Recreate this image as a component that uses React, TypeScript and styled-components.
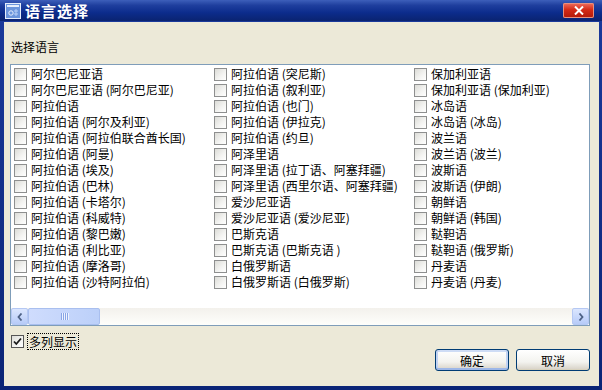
import React from 'react';
import styled, { createGlobalStyle } from 'styled-components';

const GlobalStyle = createGlobalStyle`
  html, body {
    margin: 0;
    padding: 0;
    background: #0a246a;
  }
  body {
    font-family: "Noto Sans CJK SC", "Noto Sans", sans-serif;
    font-size: 12px;
    color: #000;
  }
`;

const languages: string[] = [
  '阿尔巴尼亚语',
  '阿尔巴尼亚语 (阿尔巴尼亚)',
  '阿拉伯语',
  '阿拉伯语 (阿尔及利亚)',
  '阿拉伯语 (阿拉伯联合酋长国)',
  '阿拉伯语 (阿曼)',
  '阿拉伯语 (埃及)',
  '阿拉伯语 (巴林)',
  '阿拉伯语 (卡塔尔)',
  '阿拉伯语 (科威特)',
  '阿拉伯语 (黎巴嫩)',
  '阿拉伯语 (利比亚)',
  '阿拉伯语 (摩洛哥)',
  '阿拉伯语 (沙特阿拉伯)',
  '阿拉伯语 (突尼斯)',
  '阿拉伯语 (叙利亚)',
  '阿拉伯语 (也门)',
  '阿拉伯语 (伊拉克)',
  '阿拉伯语 (约旦)',
  '阿泽里语',
  '阿泽里语 (拉丁语、阿塞拜疆)',
  '阿泽里语 (西里尔语、阿塞拜疆)',
  '爱沙尼亚语',
  '爱沙尼亚语 (爱沙尼亚)',
  '巴斯克语',
  '巴斯克语 (巴斯克语 )',
  '白俄罗斯语',
  '白俄罗斯语 (白俄罗斯)',
  '保加利亚语',
  '保加利亚语 (保加利亚)',
  '冰岛语',
  '冰岛语 (冰岛)',
  '波兰语',
  '波兰语 (波兰)',
  '波斯语',
  '波斯语 (伊朗)',
  '朝鲜语',
  '朝鲜语 (韩国)',
  '鞑靼语',
  '鞑靼语 (俄罗斯)',
  '丹麦语',
  '丹麦语 (丹麦)',
];

const Window = styled.div`
  width: 602px;
  height: 390px;
  display: flex;
  flex-direction: column;
  box-sizing: border-box;
  background: linear-gradient(#1b3a9c, #0a2476);
  padding: 0 3px 4px 4px;
`;

const TitleBar = styled.div`
  height: 21px;
  display: flex;
  align-items: center;
  margin: 0 -3px 0 -4px;
  padding: 0 8px 0 5px;
  background: linear-gradient(#3d5fba 0%, #1f3f9e 25%, #0c2c8c 60%, #0a2370 100%);
`;

const TitleText = styled.div`
  flex: 1;
  margin-left: 4px;
  color: #fff;
  font-size: 15px;
  font-weight: bold;
  line-height: 20px;
  letter-spacing: 1px;
`;

const CloseButton = styled.div`
  width: 31px;
  height: 15px;
  border-radius: 2px;
  display: flex;
  align-items: center;
  justify-content: center;
  background: linear-gradient(#f07060 0%, #d42a16 45%, #b01808 100%);
  box-shadow: inset 0 0 0 1px #e8907e;
`;

const Body = styled.div`
  flex: 1;
  display: flex;
  flex-direction: column;
  background: #ece9d8;
  padding: 17px 9px 0 6px;
  margin-top: 1px;
`;

const Caption = styled.div`
  line-height: 16px;
  margin-left: 1px;
  margin-bottom: 9px;
`;

const ListBox = styled.div`
  height: 262px;
  box-sizing: border-box;
  border: 1px solid #7f9db9;
  background: #fff;
  display: flex;
  flex-direction: column;
`;

const ListContent = styled.div`
  flex: 1;
  overflow: hidden;
  padding: 1px 0 0 3px;
  display: grid;
  grid-auto-flow: column;
  grid-template-rows: repeat(14, 16px);
  grid-auto-columns: 200px;
  align-content: start;
`;

const Item = styled.div`
  display: flex;
  align-items: center;
  gap: 4px;
  white-space: nowrap;
  line-height: 16px;
`;

const Box = styled.span`
  width: 11px;
  height: 11px;
  flex: none;
  border: 1px solid #8e8f8f;
  background: linear-gradient(135deg, #dcdcd7 0%, #f4f4f2 60%, #ffffff 100%);
  display: flex;
  align-items: center;
  justify-content: center;
`;

const ScrollBar = styled.div`
  height: 17px;
  display: flex;
  background: linear-gradient(#f3f1ec, #fefefb);
`;

const ScrollButton = styled.div`
  width: 17px;
  height: 17px;
  box-sizing: border-box;
  border: 1px solid #b5c8f3;
  border-radius: 2px;
  background: linear-gradient(#dbe6fe, #b7cbf8);
  display: flex;
  align-items: center;
  justify-content: center;
`;

const Thumb = styled.div<{ $width: number }>`
  width: ${(p) => p.$width}px;
  height: 17px;
  box-sizing: border-box;
  border: 1px solid #a9bfef;
  border-radius: 2px;
  background: linear-gradient(90deg, #cfdcfd, #bcd0f9);
  display: flex;
  align-items: center;
  justify-content: center;
  gap: 1px;
`;

const Grip = styled.span`
  width: 1px;
  height: 7px;
  background: #8aa6e6;
  box-shadow: 1px 0 0 #eef3fe;
`;

const Track = styled.div`
  flex: 1;
`;

const Footer = styled.div`
  flex: 1;
  display: flex;
  justify-content: space-between;
  align-items: flex-start;
`;

const Toggle = styled.label`
  margin-top: 8px;
  margin-left: 1px;
  display: flex;
  align-items: center;
  gap: 4px;
`;

const ToggleText = styled.span`
  outline: 1px dotted #000;
  line-height: 15px;
  padding: 0 1px;
`;

const Buttons = styled.div`
  display: flex;
  gap: 7px;
  margin-top: 23px;
`;

const Button = styled.button<{ $default?: boolean }>`
  width: 74px;
  height: 22px;
  font-family: inherit;
  font-size: 12px;
  padding: 0;
  border: 1px solid #003c74;
  border-radius: 3px;
  background: linear-gradient(#ffffff 0%, #f3f3ef 60%, #d6d0c5 100%);
  box-shadow: ${(p) =>
    p.$default
      ? 'inset 0 -2px 0 #9db7e8, inset 2px 0 0 #c2d3f2, inset -2px 0 0 #c2d3f2, inset 0 2px 0 #cedcf5'
      : 'inset 0 -1px 0 #d8d2bd'};
  color: #000;
`;

const AppIcon = () => (
  <svg width="16" height="16" viewBox="0 0 16 16">
    <rect x="0.5" y="0.5" width="15" height="15" fill="#6b95dc" stroke="#e6eefc" />
    <rect x="2" y="2" width="12" height="2" fill="#e6eefc" />
    <circle cx="6" cy="10" r="2.2" fill="none" stroke="#e6eefc" strokeWidth="1" />
    <path d="M9 8h4M9 11h4M11 6v7" stroke="#b8d0f8" strokeWidth="1" />
  </svg>
);

const CloseIcon = () => (
  <svg width="10" height="9" viewBox="0 0 10 9">
    <path d="M1 0.5l8 8M9 0.5l-8 8" stroke="#fff" strokeWidth="2" />
  </svg>
);

const Arrow = ({ dir }: { dir: 'left' | 'right' }) => (
  <svg width="6" height="8" viewBox="0 0 6 8">
    <path
      d={dir === 'left' ? 'M4.5 0.5L1.5 4l3 3.5' : 'M1.5 0.5L4.5 4l-3 3.5'}
      fill="none"
      stroke="#4d6185"
      strokeWidth="1.8"
    />
  </svg>
);

const Check = () => (
  <svg width="9" height="9" viewBox="0 0 9 9">
    <path d="M1 4.5l2.3 2.5L8 1.5" fill="none" stroke="#1a1a1a" strokeWidth="1.8" />
  </svg>
);

const CheckedBox = styled(Box)`
  border-color: #555;
`;

export default function App() {
  return (
    <>
      <GlobalStyle />
      <Window>
        <TitleBar>
          <AppIcon />
          <TitleText>语言选择</TitleText>
          <CloseButton>
            <CloseIcon />
          </CloseButton>
        </TitleBar>
        <Body>
          <Caption>选择语言</Caption>
          <ListBox>
            <ListContent>
              {languages.map((name) => (
                <Item key={name}>
                  <Box />
                  <span>{name}</span>
                </Item>
              ))}
            </ListContent>
            <ScrollBar>
              <ScrollButton>
                <Arrow dir="left" />
              </ScrollButton>
              <Thumb $width={72}>
                <Grip />
                <Grip />
                <Grip />
                <Grip />
              </Thumb>
              <Track />
              <ScrollButton>
                <Arrow dir="right" />
              </ScrollButton>
            </ScrollBar>
          </ListBox>
          <Footer>
            <Toggle>
              <CheckedBox>
                <Check />
              </CheckedBox>
              <ToggleText>多列显示</ToggleText>
            </Toggle>
            <Buttons>
              <Button $default>确定</Button>
              <Button>取消</Button>
            </Buttons>
          </Footer>
        </Body>
      </Window>
    </>
  );
}
